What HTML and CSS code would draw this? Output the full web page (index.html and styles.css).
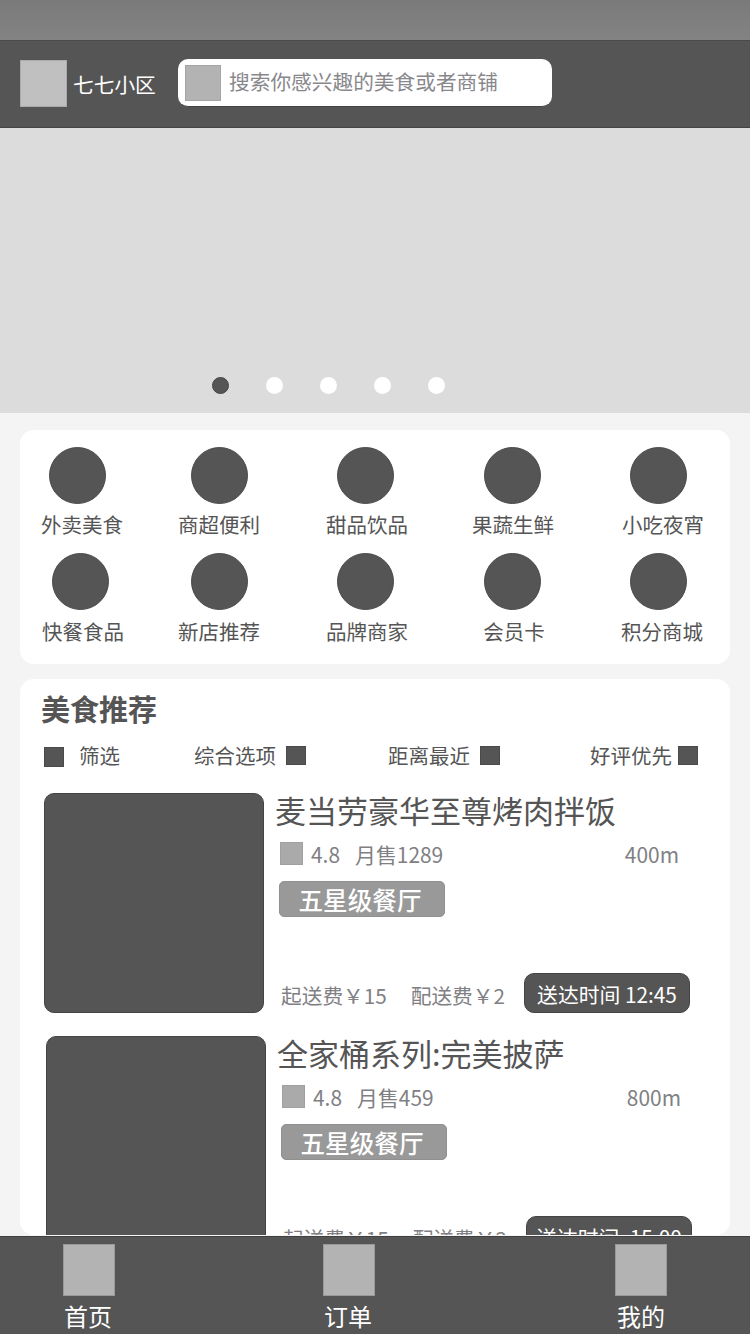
FILE: index.html
```html
<!DOCTYPE html>
<html lang="zh-CN">
<head>
    <meta charset="UTF-8">
    <meta name="viewport" content="width=device-width, initial-scale=1.0">
    <title>外卖首页</title>
    <link rel="stylesheet" href="styles.css">
</head>
<body>
    <div class="status-bar"></div>

    <!-- Header -->
    <div class="header">
        <div class="location-icon"></div>
        <span class="location-name">七七小区</span>
        <div class="search-box">
            <div class="search-icon"></div>
            <span class="search-text">搜索你感兴趣的美食或者商铺</span>
        </div>
    </div>

    <!-- Banner -->
    <div class="banner">
        <div class="dots">
            <span class="dot dot-active"></span>
            <span class="dot"></span>
            <span class="dot"></span>
            <span class="dot"></span>
            <span class="dot"></span>
        </div>
    </div>

    <!-- Categories -->
    <div class="category-card">
        <div class="category-item first-top"><div class="category-icon"></div><span>外卖美食</span></div>
        <div class="category-item top-row"><div class="category-icon"></div><span>商超便利</span></div>
        <div class="category-item top-row"><div class="category-icon"></div><span>甜品饮品</span></div>
        <div class="category-item top-row"><div class="category-icon"></div><span>果蔬生鲜</span></div>
        <div class="category-item top-row last-top"><div class="category-icon"></div><span>小吃夜宵</span></div>
        <div class="category-item first-bottom"><div class="category-icon"></div><span>快餐食品</span></div>
        <div class="category-item"><div class="category-icon"></div><span>新店推荐</span></div>
        <div class="category-item"><div class="category-icon"></div><span>品牌商家</span></div>
        <div class="category-item"><div class="category-icon"></div><span>会员卡</span></div>
        <div class="category-item last-bottom"><div class="category-icon"></div><span>积分商城</span></div>
    </div>

    <!-- Recommendations -->
    <div class="food-card">
        <h2>美食推荐</h2>
        <div class="filter-row">
            <div class="filter filter-main"><i class="filter-box"></i><span>筛选</span></div>
            <div class="filter filter-all"><span>综合选项</span><i class="filter-box"></i></div>
            <div class="filter filter-near"><span>距离最近</span><i class="filter-box"></i></div>
            <div class="filter filter-good"><span>好评优先</span><i class="filter-box"></i></div>
        </div>

        <div class="food-item">
            <div class="food-image"></div>
            <div class="food-info">
                <h3>麦当劳豪华至尊烤肉拌饭</h3>
                <div class="rating-row">
                    <i class="rating-icon"></i>
                    <span class="rating">4.8</span>
                    <span class="sales">月售1289</span>
                    <span class="distance">400m</span>
                </div>
                <div class="tag">五星级餐厅</div>
                <div class="fee-row">
                    <span class="fee">起送费￥15</span>
                    <span class="fee">配送费￥2</span>
                    <span class="time">送达时间 12:45</span>
                </div>
            </div>
        </div>

        <div class="food-item food-item-second">
            <div class="food-image"></div>
            <div class="food-info">
                <h3>全家桶系列:完美披萨</h3>
                <div class="rating-row">
                    <i class="rating-icon"></i>
                    <span class="rating">4.8</span>
                    <span class="sales">月售459</span>
                    <span class="distance">800m</span>
                </div>
                <div class="tag">五星级餐厅</div>
                <div class="fee-row">
                    <span class="fee">起送费￥15</span>
                    <span class="fee">配送费￥2</span>
                    <span class="time">送达时间 :15:00</span>
                </div>
            </div>
        </div>
    </div>

    <!-- Tab bar -->
    <div class="tab-bar">
        <div class="tab tab-shifted"><div class="tab-icon"></div><span>首页</span></div>
        <div class="tab tab-shifted"><div class="tab-icon"></div><span>订单</span></div>
        <div class="tab"><div class="tab-icon"></div><span>我的</span></div>
    </div>
</body>
</html>
```
FILE: styles.css
```css
* {
    box-sizing: border-box;
    margin: 0;
    padding: 0;
}

html, body {
    height: 1334px;
    overflow: hidden;
}

body {
    font-family: "Noto Sans CJK SC", "Noto Sans", sans-serif;
    background-color: #f4f4f4;
    color: #555;
    display: flex;
    flex-direction: column;
}

.status-bar {
    height: 40px;
    flex: none;
    background: linear-gradient(#7a7a7a, #838383);
}

.header {
    height: 88px;
    flex: none;
    display: flex;
    align-items: center;
    padding: 0 0 0 20px;
    background-color: #555;
    border-top: 1px solid #4a4a4a;
    border-bottom: 1px solid #444;
}

.location-icon {
    width: 47px;
    height: 47px;
    margin-top: -1px;
    background-color: #c0c0c0;
    border: 1px solid #aaa;
}

.location-name {
    width: 111px;
    padding: 0 0 0 6px;
    color: #fff;
    font-size: 20.7px;
    line-height: 30px;
}

.search-box {
    width: 374px;
    height: 48px;
    margin-top: -2px;
    display: flex;
    align-items: center;
    padding-left: 7px;
    background-color: #fff;
    border-radius: 10px;
    border-bottom: 1px solid #444;
}

.search-icon {
    width: 36px;
    height: 36px;
    background-color: #b3b3b3;
    border: 1px solid #a5a5a5;
}

.search-text {
    margin: -3px 0 0 8px;
    color: #88888c;
    font-size: 20.7px;
    line-height: 30px;
    white-space: nowrap;
}

.banner {
    height: 285px;
    flex: none;
    padding: 249px 0 0 212px;
    background-color: #dcdcdc;
}

.dots {
    display: flex;
    gap: 37px;
}

.dot {
    width: 17px;
    height: 17px;
    border-radius: 50%;
    background-color: #fff;
}

.dot-active {
    background-color: #555;
    border: 1px solid #444;
}

.category-card {
    height: 234px;
    flex: none;
    margin: 17px 20px 0;
    padding-top: 17px;
    display: grid;
    grid-template-columns: 120px 158px 134px 160px 132px;
    grid-template-rows: 106px 106px;
    background-color: #fff;
    border-radius: 14px;
}

.category-item {
    display: flex;
    flex-direction: column;
    align-items: center;
    font-size: 20.5px;
    line-height: 28px;
    white-space: nowrap;
}

.category-item span {
    margin-top: 7px;
    padding-left: 4px;
}

.category-icon {
    width: 57px;
    height: 57px;
    flex: none;
    border-radius: 50%;
    background-color: #555;
    border: 1px solid #4a4a4a;
}

.first-top .category-icon {
    margin-right: 6px;
}

.first-top span,
.top-row span {
    margin-top: 6px;
}

.category-item:nth-child(4) span {
    padding-left: 2px;
}

.category-item:nth-child(2) span,
.category-item:nth-child(7) span {
    padding-left: 0;
}

.first-top span {
    padding-left: 4px;
}

.first-bottom span {
    padding-left: 6px;
}

.last-top span {
    padding-left: 10px;
}

.last-bottom span {
    padding-left: 8px;
}

.food-card {
    flex: 1;
    min-height: 0;
    margin: 15px 20px 1px;
    overflow: hidden;
    background-color: #fff;
    border-radius: 14px;
}

h2 {
    padding: 10px 0 0 21px;
    font-size: 29px;
    line-height: 38px;
    font-weight: 700;
}

.filter-row {
    height: 28px;
    margin-top: 15px;
    display: grid;
    grid-template-columns: 174px 194px 202px 1fr;
    font-size: 20.5px;
    line-height: 28px;
}

.filter {
    display: flex;
    align-items: center;
    white-space: nowrap;
}

.filter span {
    margin: -3px 10px 0 0;
}

.filter-box {
    width: 20px;
    height: 20px;
    background-color: #555;
    border: 1px solid #4a4a4a;
}

.filter-main {
    padding-left: 24px;
}

.filter-main .filter-box {
    margin: 2px 15px 0 0;
}

.filter-all .filter-box,
.filter-near .filter-box,
.filter-good .filter-box {
    height: 19px;
    margin-top: -1px;
}

.filter-good span {
    margin-right: 6px;
}

.food-item {
    height: 220px;
    margin: 23px 0 0 24px;
    display: flex;
}

.food-item-second {
    margin-left: 26px;
}

.food-image {
    width: 220px;
    height: 220px;
    flex: none;
    background-color: #555;
    border: 1px solid #444;
    border-radius: 10px;
}

.food-info {
    width: 426px;
    height: 220px;
    display: flex;
    flex-direction: column;
}

h3 {
    margin-top: -2px;
    padding-left: 11px;
    font-size: 31px;
    line-height: 38px;
    font-weight: 400;
    white-space: nowrap;
}

.rating-row {
    height: 23px;
    margin-top: 13px;
    padding: 0 11px 0 16px;
    display: flex;
    align-items: center;
    color: #808084;
    font-size: 20.9px;
    line-height: 28px;
}

.rating-icon {
    width: 23px;
    height: 23px;
    background-color: #aaa;
    border: 1px solid #a0a0a0;
}

.rating {
    margin-left: 8px;
}

.sales {
    margin-left: 15px;
}

.distance {
    margin-left: auto;
}

.tag {
    width: 166px;
    height: 36px;
    margin: 16px 0 0 15px;
    padding-right: 4px;
    background-color: #999;
    border: 1px solid #909090;
    border-radius: 5px;
    color: #fff;
    font-size: 24.6px;
    font-weight: 500;
    line-height: 34px;
    text-align: center;
}

.fee-row {
    margin-top: auto;
    padding-left: 17px;
    display: flex;
    align-items: flex-end;
}

.fee {
    padding-bottom: 4px;
    color: #808084;
    font-size: 20.7px;
    line-height: 28px;
    white-space: nowrap;
}

.fee:first-child {
    margin-right: 24px;
}

.time {
    width: 166px;
    height: 40px;
    flex: none;
    margin-left: auto;
    background-color: #555;
    border: 1px solid #444;
    border-radius: 10px;
    color: #fff;
    font-size: 20.8px;
    line-height: 40px;
    text-align: center;
    white-space: nowrap;
}

.tab-bar {
    height: 98px;
    flex: none;
    padding: 7px 0 0 63px;
    display: grid;
    grid-template-columns: 260px 292px 1fr;
    background-color: #555;
    border-top: 1px solid #404040;
}

.tab {
    width: 52px;
    display: flex;
    flex-direction: column;
    align-items: center;
    color: #fff;
    font-size: 24px;
    line-height: 30px;
    white-space: nowrap;
}

.tab span {
    margin-top: 5px;
}

.tab-shifted span {
    margin-right: 2px;
}

.tab-icon {
    width: 52px;
    height: 52px;
    flex: none;
    background-color: #b3b3b3;
    border: 1px solid #999;
}
```
